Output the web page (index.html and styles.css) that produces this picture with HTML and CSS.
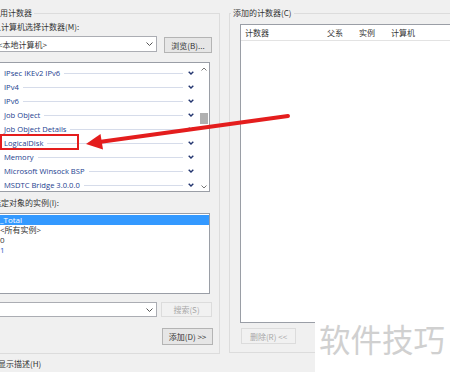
FILE: index.html
```html
<!DOCTYPE html>
<html lang="zh-CN">
<head>
  <meta charset="UTF-8">
  <title>添加计数器</title>
  <link rel="stylesheet" href="styles.css">
</head>
<body>
  <div class="panes">
    <fieldset class="group group-left">
      <legend>可用计数器</legend>
      <div class="label">从计算机选择计数器(M):</div>
      <div class="row">
        <div class="combo">
          <span>&lt;本地计算机&gt;</span>
          <svg class="caret" width="7" height="4" viewBox="0 0 7 4"><polyline points="0.5,0.5 3.5,3.5 6.5,0.5" fill="none" stroke="#555" stroke-width="1"/></svg>
        </div>
        <button class="btn btn-browse">浏览(B)...</button>
      </div>

      <div class="counter-list">
        <ul class="counters">
          <li><span>IPsec IKEv2 IPv6</span><i class="rule"></i><svg class="chev" width="6" height="4" viewBox="0 0 6 4"><polyline points="0.7,0.7 3,3 5.3,0.7" fill="none" stroke="#23356f" stroke-width="1.4"/></svg></li>
          <li><span>IPv4</span><i class="rule"></i><svg class="chev" width="6" height="4" viewBox="0 0 6 4"><polyline points="0.7,0.7 3,3 5.3,0.7" fill="none" stroke="#23356f" stroke-width="1.4"/></svg></li>
          <li><span>IPv6</span><i class="rule"></i><svg class="chev" width="6" height="4" viewBox="0 0 6 4"><polyline points="0.7,0.7 3,3 5.3,0.7" fill="none" stroke="#23356f" stroke-width="1.4"/></svg></li>
          <li><span>Job Object</span><i class="rule"></i><svg class="chev" width="6" height="4" viewBox="0 0 6 4"><polyline points="0.7,0.7 3,3 5.3,0.7" fill="none" stroke="#23356f" stroke-width="1.4"/></svg></li>
          <li><span>Job Object Details</span><i class="rule"></i><svg class="chev" width="6" height="4" viewBox="0 0 6 4"><polyline points="0.7,0.7 3,3 5.3,0.7" fill="none" stroke="#23356f" stroke-width="1.4"/></svg></li>
          <li><span>LogicalDisk</span><i class="rule"></i><svg class="chev" width="6" height="4" viewBox="0 0 6 4"><polyline points="0.7,0.7 3,3 5.3,0.7" fill="none" stroke="#23356f" stroke-width="1.4"/></svg></li>
          <li><span>Memory</span><i class="rule"></i><svg class="chev" width="6" height="4" viewBox="0 0 6 4"><polyline points="0.7,0.7 3,3 5.3,0.7" fill="none" stroke="#23356f" stroke-width="1.4"/></svg></li>
          <li><span>Microsoft Winsock BSP</span><i class="rule"></i><svg class="chev" width="6" height="4" viewBox="0 0 6 4"><polyline points="0.7,0.7 3,3 5.3,0.7" fill="none" stroke="#23356f" stroke-width="1.4"/></svg></li>
          <li><span>MSDTC Bridge 3.0.0.0</span><i class="rule"></i><svg class="chev" width="6" height="4" viewBox="0 0 6 4"><polyline points="0.7,0.7 3,3 5.3,0.7" fill="none" stroke="#23356f" stroke-width="1.4"/></svg></li>
        </ul>
        <div class="scrollbar">
          <svg class="sb-arrow" width="6" height="4" viewBox="0 0 6 4"><polyline points="0.5,3.5 3,1 5.5,3.5" fill="none" stroke="#777" stroke-width="1"/></svg>
          <div class="sb-track"><div class="sb-thumb"></div></div>
          <svg class="sb-arrow" width="6" height="4" viewBox="0 0 6 4"><polyline points="0.5,0.5 3,3 5.5,0.5" fill="none" stroke="#777" stroke-width="1"/></svg>
        </div>
      </div>

      <div class="label label-inst">选定对象的实例(I):</div>
      <ul class="instances">
        <li class="selected">_Total</li>
        <li>&lt;所有实例&gt;</li>
        <li>0</li>
        <li class="blue">1</li>
      </ul>

      <div class="row row-search">
        <div class="combo combo-search">
          <span></span>
          <svg class="caret" width="7" height="4" viewBox="0 0 7 4"><polyline points="0.5,0.5 3.5,3.5 6.5,0.5" fill="none" stroke="#555" stroke-width="1"/></svg>
        </div>
        <button class="btn btn-side" disabled>搜索(S)</button>
      </div>
      <div class="row row-add">
        <button class="btn btn-side">添加(D) &gt;&gt;</button>
      </div>
    </fieldset>

    <fieldset class="group group-right">
      <legend>添加的计数器(C)</legend>
      <div class="listview">
        <div class="lv-head">
          <span class="col col-name">计数器</span>
          <span class="col col-parent">父系</span>
          <span class="col col-inst">实例</span>
          <span class="col col-host">计算机</span>
        </div>
      </div>
      <button class="btn btn-remove" disabled>删除(R) &lt;&lt;</button>
    </fieldset>
  </div>

  <div class="desc">显示描述(H)</div>

  <!-- annotation drawn over the dialog -->
  <svg class="annotation" width="450" height="372" viewBox="0 0 450 372">
    <rect x="1" y="135" width="77" height="14" fill="none" stroke="#e41d1d" stroke-width="2"/>
    <line x1="288" y1="116" x2="101" y2="141.8" stroke="#e41d1d" stroke-width="4" stroke-linecap="round"/>
    <polygon points="86,144 103,149.5 100.5,134" fill="#e41d1d"/>
  </svg>

  <div class="watermark">软件技巧</div>
</body>
</html>
```

FILE: styles.css
```css
* {
  box-sizing: border-box;
}
body {
  margin: 0;
  width: 450px;
  height: 372px;
  overflow: hidden;
  position: relative;
  background: #f0f0f0;
  font-family: "Noto Sans CJK SC", sans-serif;
  font-size: 8px;
  color: #1e1e1e;
}
.panes {
  display: flex;
  align-items: flex-start;
  gap: 9px;
  margin-left: -26px;
  padding-top: 8px;
}
.group {
  margin: 0;
  min-width: 0;
  flex-shrink: 0;
  border: 1px solid #dcdcdc;
}
.group legend {
  height: 10px;
  line-height: 10px;
  padding: 0 2px;
  color: #333;
}
.group-left {
  width: 246px;
  padding: 4px 6px 8px 19px;
}
.group-left legend {
  margin-left: -4px;
}
.group-right {
  width: 240px;
  padding: 6px 0 8px 10px;
}
.group-right legend {
  margin-left: -9px;
}
.label {
  height: 10px;
  line-height: 10px;
  color: #333;
  margin-bottom: 4px;
  margin-left: -1px;
}
.row {
  display: flex;
  align-items: flex-start;
}
.combo {
  width: 163px;
  height: 16px;
  background: #fff;
  border: 1px solid #abadb3;
  display: flex;
  align-items: center;
  justify-content: space-between;
  padding: 0 3px 0 3px;
  color: #333;
}
.btn {
  font-family: inherit;
  font-size: 8px;
  color: #333;
  background: #e6e6e6;
  border: 1px solid #b4b4b4;
  padding: 0;
  margin: 0;
}
.btn:disabled {
  background: #f1f1f1;
  border-color: #dcdcdc;
  color: #a8a8a8;
}
.btn-browse {
  width: 48px;
  height: 16px;
  margin: 1px 0 0 7px;
}
.btn-side {
  width: 51px;
  height: 16px;
  margin-left: 4px;
}

/* counter list */
.counter-list {
  width: 216px;
  height: 130px;
  margin-top: 9px;
  background: #fff;
  border: 1px solid #9a9ea6;
  display: flex;
}
.counters {
  list-style: none;
  margin: 0;
  padding: 3px 0 0 0;
  flex: 1;
}
.counters li {
  height: 14px;
  display: flex;
  align-items: center;
  padding-left: 9px;
  padding-right: 5px;
  font-family: "Open Sans", sans-serif;
  font-size: 7.6px;
  color: #24418f;
}
.counters .rule {
  flex: 1;
  height: 0;
  border-top: 1px solid #d6dcea;
  margin: 0 5px 0 4px;
}
.scrollbar {
  width: 10px;
  display: flex;
  flex-direction: column;
  align-items: center;
  padding: 4px 0 2px;
  background: #fff;
}
.sb-track {
  flex: 1;
  width: 100%;
  padding: 42px 1px 0;
}
.sb-thumb {
  height: 11px;
  background: #b0b0b0;
}

/* instances */
.label-inst {
  margin-top: 6px;
  margin-bottom: 5px;
}
.instances {
  list-style: none;
  margin: 0;
  padding: 1px 0 0;
  width: 216px;
  height: 81px;
  background: #fff;
  border: 1px solid #9a9ea6;
}
.instances li {
  height: 10px;
  line-height: 10px;
  padding-left: 5px;
  color: #333;
  font-family: "Open Sans", "Noto Sans CJK SC", sans-serif;
}
.instances li.selected {
  background: #3399ff;
  color: #fff;
}
.instances li.blue {
  color: #2b63c4;
}
.row-search {
  margin-top: 8px;
}
.combo-search {
  height: 15px;
}
.row-search .btn-side {
  height: 15px;
}
.row-add {
  justify-content: flex-end;
  margin-top: 11px;
}
.row-add .btn-side {
  height: 17px;
}

/* added counters */
.listview {
  height: 299px;
  background: #fff;
  border: 1px solid #9a9ea6;
  border-right: none;
}
.lv-head {
  height: 16px;
  display: flex;
  align-items: center;
  border-bottom: 1px solid #e3e3e3;
  color: #333;
}
.col {
  padding-left: 4px;
}
.col-name { width: 82px; }
.col-parent { width: 32px; }
.col-inst { width: 32px; }
.col-host { flex: 1; }
.btn-remove {
  width: 55px;
  height: 16px;
  margin-top: 5px;
  margin-left: 1px;
}
.desc {
  margin: 5px 0 0 -2px;
  height: 10px;
  line-height: 10px;
  color: #333;
}

.annotation {
  position: absolute;
  left: 0;
  top: 0;
  pointer-events: none;
}
.watermark {
  position: absolute;
  left: 315px;
  top: 318px;
  width: 135px;
  height: 54px;
  background: #fff;
  color: #d0d0d0;
  font-size: 31.5px;
  line-height: 40px;
  padding-left: 4px;
  font-family: "Noto Sans CJK SC", sans-serif;
}
```
